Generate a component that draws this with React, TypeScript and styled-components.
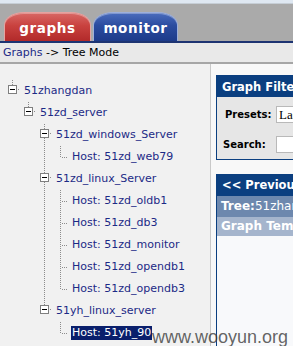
import React from "react";
import styled, { createGlobalStyle } from "styled-components";

const GlobalStyle = createGlobalStyle`
  html, body {
    margin: 0;
    padding: 0;
    background: #f1f1f1;
  }
  body {
    font-family: "DejaVu Sans", Verdana, sans-serif;
  }
`;

const Page = styled.div`
  position: relative;
  width: 293px;
  height: 346px;
  overflow: hidden;
  display: flex;
  flex-direction: column;
  background: #f1f1f1;
`;

const TopStrip = styled.div`
  height: 3px;
  background: #dfe8f2;
  border-bottom: 1px solid #c6ced6;
`;

const TabBar = styled.div`
  height: 37px;
  display: flex;
  align-items: flex-end;
  gap: 2px;
  padding-left: 4px;
  background: #aaaaaa;
  border-bottom: 2px solid #1d3472;
`;

const Tab = styled.div<{ $tone: "red" | "blue"; $width: number }>`
  width: ${(p) => p.$width}px;
  height: 29px;
  box-sizing: border-box;
  display: flex;
  align-items: center;
  justify-content: center;
  padding-top: 2px;
  border: 1px solid ${(p) => (p.$tone === "red" ? "#e6a3a0" : "#9db0dc")};
  border-bottom: none;
  border-radius: 20px 20px 0 0 / 13px 13px 0 0;
  background: ${(p) =>
    p.$tone === "red"
      ? "linear-gradient(to bottom, #d86865 0%, #c9423f 45%, #b22a2a 100%)"
      : "linear-gradient(to bottom, #4a6cbd 0%, #2b4c9f 45%, #1d3b8a 100%)"};
  box-shadow: inset 0 1px 0 rgba(255, 255, 255, 0.3);
  color: #ffffff;
  font-size: 13.5px;
  font-weight: bold;
  letter-spacing: 0.6px;
`;

const Crumbs = styled.div`
  height: 19px;
  line-height: 19px;
  padding-left: 3px;
  background: #e9e9e9;
  border-bottom: 2px solid #a6a6a6;
  font-size: 11px;
  color: #000000;
`;

const CrumbLink = styled.span`
  color: #1c2a86;
`;

const Content = styled.div`
  flex: 1;
  display: flex;
  min-height: 0;
`;

const TreePane = styled.div`
  width: 210px;
  flex-shrink: 0;
  padding-top: 16px;
  background: #f1f1f1;
  border-right: 1px solid #c9c9c9;
`;

const TreeRow = styled.div`
  height: 22px;
  display: flex;
  align-items: center;
  padding-left: 4px;
`;

const Cell = styled.span`
  width: 16px;
  height: 22px;
  flex-shrink: 0;
  display: block;
`;

const Label = styled.span<{ $selected?: boolean }>`
  margin-left: ${(p) => (p.$selected ? 3 : 4)}px;
  padding: 0 ${(p) => (p.$selected ? 1 : 0)}px;
  line-height: 14px;
  font-size: 11px;
  white-space: nowrap;
  color: ${(p) => (p.$selected ? "#ffffff" : "#1c2a86")};
  background: ${(p) => (p.$selected ? "#0a1f6c" : "transparent")};
`;

const RightPane = styled.div`
  flex: 1;
  min-width: 0;
  overflow: hidden;
  display: flex;
  flex-direction: column;
  padding: 11px 0 0 5px;
  background: #f8f8f8;
`;

const FilterBox = styled.div`
  width: 260px;
  flex-shrink: 0;
  border: 1px solid #0b3f80;
  background: #e6e6e6;
`;

const BoxHeader = styled.div<{ $height: number }>`
  height: ${(p) => p.$height}px;
  line-height: ${(p) => p.$height + 1}px;
  padding-left: 5px;
  background: #0b3f80;
  color: #ffffff;
  font-size: 11.5px;
  font-weight: bold;
  white-space: nowrap;
`;

const FilterBody = styled.div`
  padding-top: 2px;
`;

const FilterRow = styled.div`
  height: 30px;
  display: flex;
  align-items: center;
`;

const FieldName = styled.span<{ $pad: number }>`
  width: ${(p) => 59 - p.$pad}px;
  padding-left: ${(p) => p.$pad}px;
  font-size: 10px;
  font-weight: bold;
  color: #000000;
`;

const Field = styled.div`
  width: 180px;
  height: 17px;
  box-sizing: border-box;
  padding-left: 2px;
  background: #ffffff;
  border: 1px solid #b9b9b9;
  font-family: "Liberation Serif", serif;
  font-size: 13px;
  line-height: 15px;
  color: #000000;
  white-space: nowrap;
`;

const NavBox = styled.div`
  width: 260px;
  flex: 1;
  margin-top: 14px;
  border-left: 1px solid #0b3f80;
  background: #f8f9fb;
`;

const BandRow = styled.div<{ $bg: string; $height: number }>`
  height: ${(p) => p.$height}px;
  line-height: ${(p) => p.$height}px;
  padding-left: 4px;
  background: ${(p) => p.$bg};
  color: #ffffff;
  font-size: 12px;
  white-space: nowrap;
`;

const Bold = styled.b`
  font-weight: bold;
`;

const Watermark = styled.div`
  position: absolute;
  left: 152px;
  top: 327px;
  font-family: "Liberation Sans", Arial, sans-serif;
  font-size: 18px;
  line-height: 20px;
  color: rgba(60, 60, 60, 0.8);
  white-space: nowrap;
`;

type Joint = "box" | "boxMore" | "tee" | "ell";

interface Node {
  guides: boolean[];
  joint: Joint;
  label: string;
  selected?: boolean;
}

const nodes: Node[] = [
  { guides: [], joint: "box", label: "51zhangdan" },
  { guides: [false], joint: "box", label: "51zd_server" },
  { guides: [false, false], joint: "boxMore", label: "51zd_windows_Server" },
  { guides: [false, false, true], joint: "ell", label: "Host: 51zd_web79" },
  { guides: [false, false], joint: "boxMore", label: "51zd_linux_Server" },
  { guides: [false, false, true], joint: "tee", label: "Host: 51zd_oldb1" },
  { guides: [false, false, true], joint: "tee", label: "Host: 51zd_db3" },
  { guides: [false, false, true], joint: "tee", label: "Host: 51zd_monitor" },
  { guides: [false, false, true], joint: "tee", label: "Host: 51zd_opendb1" },
  { guides: [false, false, true], joint: "ell", label: "Host: 51zd_opendb3" },
  { guides: [false, false], joint: "box", label: "51yh_linux_server" },
  { guides: [false, false, false], joint: "ell", label: "Host: 51yh_90", selected: true },
];

const dots = { stroke: "#8c8c8c", strokeWidth: 1, strokeDasharray: "1 1" };

function Guide({ on }: { on: boolean }) {
  return (
    <Cell>
      {on && (
        <svg width="16" height="22" viewBox="0 0 16 22">
          <line x1="8.5" y1="0" x2="8.5" y2="22" {...dots} />
        </svg>
      )}
    </Cell>
  );
}

function Connector({ joint }: { joint: Joint }) {
  const isBox = joint === "box" || joint === "boxMore";
  return (
    <Cell>
      <svg width="16" height="22" viewBox="0 0 16 22">
        {isBox ? (
          <>
            <line x1="8.5" y1="0" x2="8.5" y2="5" {...dots} />
            {joint === "boxMore" && <line x1="8.5" y1="14" x2="8.5" y2="22" {...dots} />}
            <line x1="14" y1="9.5" x2="17" y2="9.5" {...dots} />
            <rect x="4.5" y="5.5" width="8" height="8" fill="#ffffff" stroke="#7f7f7f" />
            <line x1="6" y1="9.5" x2="11" y2="9.5" stroke="#000000" />
          </>
        ) : (
          <>
            <line x1="8.5" y1="0" x2="8.5" y2={joint === "tee" ? 22 : 12} {...dots} />
            <line x1="10" y1="11.5" x2="16" y2="11.5" {...dots} />
          </>
        )}
      </svg>
    </Cell>
  );
}

export default function App() {
  return (
    <>
      <GlobalStyle />
      <Page>
        <TopStrip />
        <TabBar>
          <Tab $tone="red" $width={87}>graphs</Tab>
          <Tab $tone="blue" $width={85}>monitor</Tab>
        </TabBar>
        <Crumbs>
          <CrumbLink>Graphs</CrumbLink> -&gt; Tree Mode
        </Crumbs>
        <Content>
          <TreePane>
            {nodes.map((n) => (
              <TreeRow key={n.label}>
                {n.guides.map((g, i) => (
                  <Guide key={i} on={g} />
                ))}
                <Connector joint={n.joint} />
                <Label $selected={n.selected}>{n.label}</Label>
              </TreeRow>
            ))}
          </TreePane>
          <RightPane>
            <FilterBox>
              <BoxHeader $height={21}>Graph Filters</BoxHeader>
              <FilterBody>
                <FilterRow>
                  <FieldName $pad={8}>Presets:</FieldName>
                  <Field>Last Day</Field>
                </FilterRow>
                <FilterRow>
                  <FieldName $pad={6}>Search:</FieldName>
                  <Field />
                </FilterRow>
              </FilterBody>
            </FilterBox>
            <NavBox>
              <BoxHeader $height={22}>&lt;&lt; Previous</BoxHeader>
              <BandRow $bg="#6d88ae" $height={21}>
                <Bold>Tree:</Bold>51zhangdan
              </BandRow>
              <BandRow $bg="#a5b5cd" $height={19}>
                <Bold>Graph Template:</Bold>
              </BandRow>
            </NavBox>
          </RightPane>
        </Content>
        <Watermark>www.wooyun.org</Watermark>
      </Page>
    </>
  );
}
